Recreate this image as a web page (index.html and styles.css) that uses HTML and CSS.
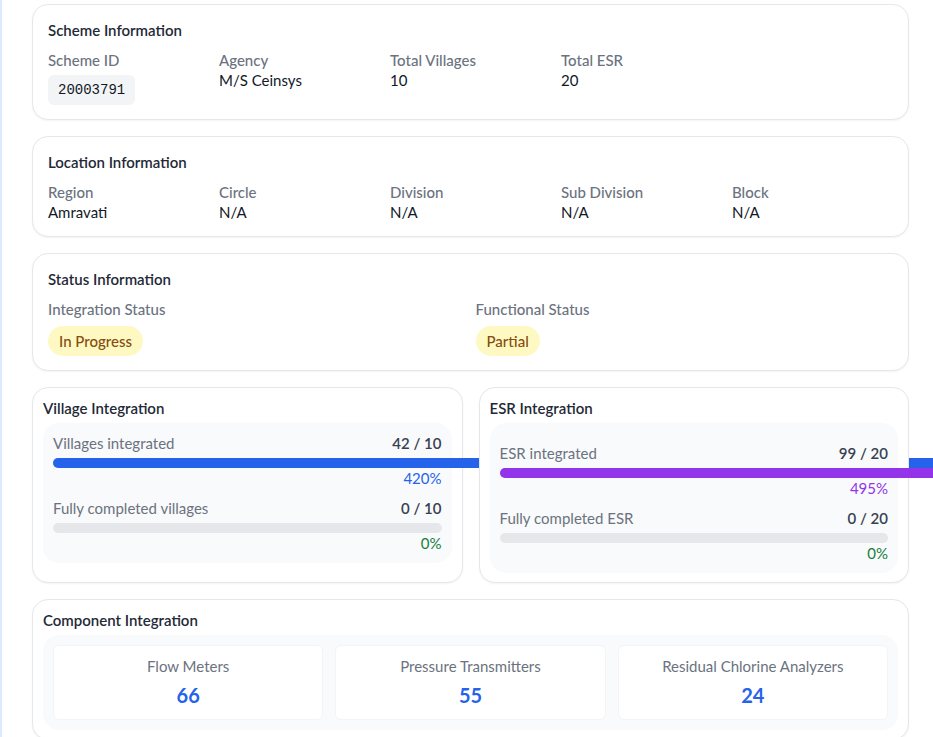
FILE: index.html
```html
<!DOCTYPE html>
<html lang="en">
<head>
<meta charset="utf-8">
<title>Scheme Details</title>
<link rel="stylesheet" href="styles.css">
</head>
<body>
<div class="page">
  <main class="content">
    <section class="card">
      <h3 class="card-title">Scheme Information</h3>
      <div class="grid grid-5">
        <div class="field"><div class="label">Scheme ID</div><div class="code">20003791</div></div>
        <div class="field"><div class="label">Agency</div><div class="value">M/S Ceinsys</div></div>
        <div class="field"><div class="label">Total Villages</div><div class="value">10</div></div>
        <div class="field"><div class="label">Total ESR</div><div class="value">20</div></div>
      </div>
    </section>

    <section class="card">
      <h3 class="card-title">Location Information</h3>
      <div class="grid grid-5">
        <div class="field"><div class="label">Region</div><div class="value">Amravati</div></div>
        <div class="field"><div class="label">Circle</div><div class="value">N/A</div></div>
        <div class="field"><div class="label">Division</div><div class="value">N/A</div></div>
        <div class="field"><div class="label">Sub Division</div><div class="value">N/A</div></div>
        <div class="field"><div class="label">Block</div><div class="value">N/A</div></div>
      </div>
    </section>

    <section class="card">
      <h3 class="card-title">Status Information</h3>
      <div class="grid grid-2">
        <div class="field"><div class="label">Integration Status</div><span class="pill pill-yellow">In Progress</span></div>
        <div class="field"><div class="label">Functional Status</div><span class="pill pill-yellow">Partial</span></div>
      </div>
    </section>

    <div class="row-2">
      <section class="card card-compact">
        <h3 class="card-title">Village Integration</h3>
        <div class="panel">
          <div class="metric">
            <div class="metric-head"><span class="metric-label">Villages integrated</span><span class="metric-count">42 / 10</span></div>
            <div class="track"><div class="fill fill-blue" style="width:420%"></div></div>
            <div class="pct pct-blue">420%</div>
          </div>
          <div class="metric">
            <div class="metric-head"><span class="metric-label">Fully completed villages</span><span class="metric-count">0 / 10</span></div>
            <div class="track"><div class="fill fill-green" style="width:0%"></div></div>
            <div class="pct pct-green">0%</div>
          </div>
        </div>
      </section>

      <section class="card card-compact">
        <h3 class="card-title">ESR Integration</h3>
        <div class="panel panel-spaced">
          <div class="metric">
            <div class="metric-head"><span class="metric-label">ESR integrated</span><span class="metric-count">99 / 20</span></div>
            <div class="track"><div class="fill fill-purple" style="width:495%"></div></div>
            <div class="pct pct-purple">495%</div>
          </div>
          <div class="metric">
            <div class="metric-head"><span class="metric-label">Fully completed ESR</span><span class="metric-count">0 / 20</span></div>
            <div class="track"><div class="fill fill-green" style="width:0%"></div></div>
            <div class="pct pct-green">0%</div>
          </div>
        </div>
      </section>
    </div>

    <section class="card card-compact">
      <h3 class="card-title">Component Integration</h3>
      <div class="panel">
        <div class="grid grid-3">
          <div class="stat"><div class="stat-label">Flow Meters</div><div class="stat-value">66</div></div>
          <div class="stat"><div class="stat-label">Pressure Transmitters</div><div class="stat-value">55</div></div>
          <div class="stat"><div class="stat-label">Residual Chlorine Analyzers</div><div class="stat-value">24</div></div>
        </div>
      </div>
    </section>
  </main>
</div>
</body>
</html>
```
FILE: styles.css
```css
html {
  overflow: hidden;
}

body {
  margin: 0;
  background: #ffffff;
  font-family: Lato, "Noto Sans", Arial, sans-serif;
  font-size: 15px;
  line-height: 20px;
  color: #111827;
}

.page {
  border-left: 2px solid #dbeafe;
  min-height: 100vh;
  padding: 4px 24px 0 30px;
}

.content {
  display: flex;
  flex-direction: column;
  gap: 16px;
}

.card {
  background: #ffffff;
  border: 1px solid #e5e7eb;
  border-radius: 16px;
  padding: 15px 15px 14px;
  box-shadow: 0 1px 2px rgba(0, 0, 0, 0.05);
}

.card-compact {
  padding: 10px 10px 9px;
}

.card-title {
  margin: 0 0 10px;
  font-size: 15px;
  line-height: 20px;
  font-weight: 600;
  color: #1f2937;
}

.card-compact .card-title {
  margin-bottom: 5px;
}

.grid {
  display: grid;
  gap: 10px;
}

.grid-5 { grid-template-columns: repeat(5, 1fr); }
.grid-2 { grid-template-columns: repeat(2, 1fr); }
.grid-3 { grid-template-columns: repeat(3, 1fr); gap: 12px; }

.label {
  color: #6b7280;
  font-weight: 500;
}

.value {
  color: #111827;
}

.code {
  display: inline-block;
  margin-top: 5px;
  padding: 7px 10px 6px;
  background: #f3f4f6;
  border-radius: 6px;
  font-family: "Liberation Mono", "DejaVu Sans Mono", monospace;
  font-size: 14px;
  line-height: 17px;
  color: #111827;
}

.pill {
  display: inline-block;
  margin-top: 7px;
  padding: 5px 11px;
  border-radius: 9999px;
  font-weight: 500;
  line-height: 20px;
}

.pill-yellow {
  background: #fef9c3;
  color: #854d0e;
}

.row-2 {
  display: grid;
  grid-template-columns: 1fr 1fr;
  gap: 16px;
  align-items: stretch;
}

.panel {
  background: #f9fafb;
  border-radius: 16px;
  padding: 10px;
  display: flex;
  flex-direction: column;
  gap: 10px;
}

.panel-spaced {
  padding-top: 20px;
}

.metric-head {
  display: flex;
  justify-content: space-between;
}

.metric-label {
  color: #6b7280;
}

.metric-count {
  color: #374151;
  font-weight: 600;
}

.track {
  margin-top: 5px;
  height: 10px;
  border-radius: 9999px;
  background: #e5e7eb;
}

.fill {
  height: 10px;
  border-radius: 9999px;
}

.fill-blue { background: #2563eb; }
.fill-purple { background: #9333ea; }
.fill-green { background: #16a34a; }

.pct {
  text-align: right;
  font-size: 15px;
  line-height: 20px;
}

.pct-blue { color: #2563eb; }
.pct-purple { color: #9333ea; }
.pct-green { color: #15803d; }

.stat {
  background: #ffffff;
  border: 1px solid #f3f4f6;
  border-radius: 6px;
  padding: 10px;
  text-align: center;
}

.stat-label {
  color: #6b7280;
}

.stat-value {
  margin-top: 5px;
  font-size: 20px;
  line-height: 28px;
  font-weight: 700;
  color: #2563eb;
}
```
